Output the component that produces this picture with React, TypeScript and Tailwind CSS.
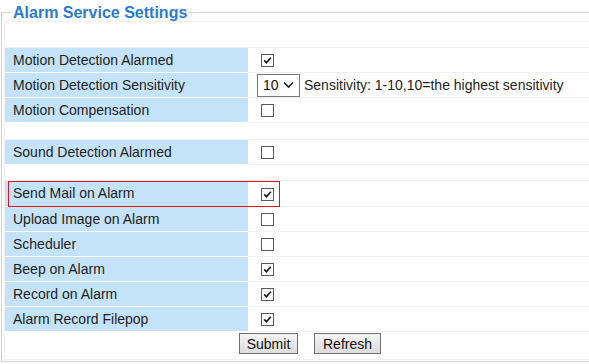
import React from 'react'

type Row = { label: string; checked?: boolean; kind?: 'select'; boxed?: boolean }

const groups: Row[][] = [
    [
        { label: 'Motion Detection Alarmed', checked: true },
        { label: 'Motion Detection Sensitivity', kind: 'select' },
        { label: 'Motion Compensation', checked: false },
    ],
    [{ label: 'Sound Detection Alarmed', checked: false }],
    [
        { label: 'Send Mail on Alarm', checked: true, boxed: true },
        { label: 'Upload Image on Alarm', checked: false },
        { label: 'Scheduler', checked: false },
        { label: 'Beep on Alarm', checked: true },
        { label: 'Record on Alarm', checked: true },
        { label: 'Alarm Record Filepop', checked: true },
    ],
]

function CheckBox({ checked }: { checked?: boolean }) {
    return (
        <svg width="13" height="13" viewBox="0 0 13 13" className="block">
            <rect x="0.5" y="0.5" width="12" height="12" fill="#fff" stroke="#5a5a5a" />
            {checked && (
                <path d="M3.2 6.4 L5.4 8.8 L9.8 3.8" fill="none" stroke="#1a1a1a" strokeWidth="1.7" />
            )}
        </svg>
    )
}

function SettingRow({ row }: { row: Row }) {
    return (
        <div className={`relative grid grid-cols-[243px_1fr] ${row.boxed ? 'h-[26px]' : 'h-[25px]'}`}>
            <div className="bg-[#c4e3f8] border-b border-white pl-[8px] flex items-center text-[14px] text-[#1e1e1e]">
                {row.label}
            </div>
            {row.kind === 'select' ? (
                <div className="border-b border-[#f1f1f1] pl-[9px] flex items-center gap-[4px]">
                    <div className="w-[43px] h-[23px] border border-[#7a7a7a] bg-white flex items-center justify-between pl-[5px] pr-[5px] text-[14px] text-[#111]">
                        <span>10</span>
                        <svg width="11" height="8" viewBox="0 0 11 8">
                            <path d="M1 1.5 L5.5 6 L10 1.5" fill="none" stroke="#222" strokeWidth="1.6" />
                        </svg>
                    </div>
                    <span className="text-[14px] text-[#1e1e1e]">Sensitivity: 1-10,10=the highest sensitivity</span>
                </div>
            ) : (
                <div className="border-b border-[#f1f1f1] pl-[13px] flex items-center">
                    <div className="mt-px">
                        <CheckBox checked={row.checked} />
                    </div>
                </div>
            )}
            {row.boxed && (
                <div className="absolute left-[3px] top-0 w-[272px] h-[26px] border border-[#e8141c] pointer-events-none" />
            )}
        </div>
    )
}

export default function App() {
    return (
        <div className="w-full h-[364px] overflow-hidden bg-white font-['Liberation_Sans',Arial,sans-serif]">
            <fieldset className="ml-px w-[640px] border border-[#d3d3d3] pb-[1px]">
                <legend className="ml-[9px] px-[2px] text-[16px] leading-[24px] font-bold text-[#2b7cd3]">
                    <span className="relative top-[1px]">Alarm Service Settings</span>
                </legend>
                <div className="-mt-[3px] ml-[2px] w-[612px] border border-[#f0f0ee]">
                    <div className="h-[26px] border-b border-[#f1f1f1]" />
                    {groups[0].map((r) => (
                        <SettingRow key={r.label} row={r} />
                    ))}
                    <div className="h-[17px] border-b border-[#f1f1f1]" />
                    {groups[1].map((r) => (
                        <SettingRow key={r.label} row={r} />
                    ))}
                    <div className="h-[16px] border-b border-[#f1f1f1]" />
                    {groups[2].map((r) => (
                        <SettingRow key={r.label} row={r} />
                    ))}
                    <div className="h-[27px] flex items-start justify-center gap-[16px] pt-[1px]">
                        <button className="w-[59px] h-[21px] border border-[#707070] bg-gradient-to-b from-[#f4f4f4] to-[#dcdcdc] text-[14px] leading-none text-[#111]">
                            Submit
                        </button>
                        <button className="w-[67px] h-[21px] border border-[#707070] bg-gradient-to-b from-[#f4f4f4] to-[#dcdcdc] text-[14px] leading-none text-[#111]">
                            Refresh
                        </button>
                    </div>
                </div>
            </fieldset>
        </div>
    )
}
